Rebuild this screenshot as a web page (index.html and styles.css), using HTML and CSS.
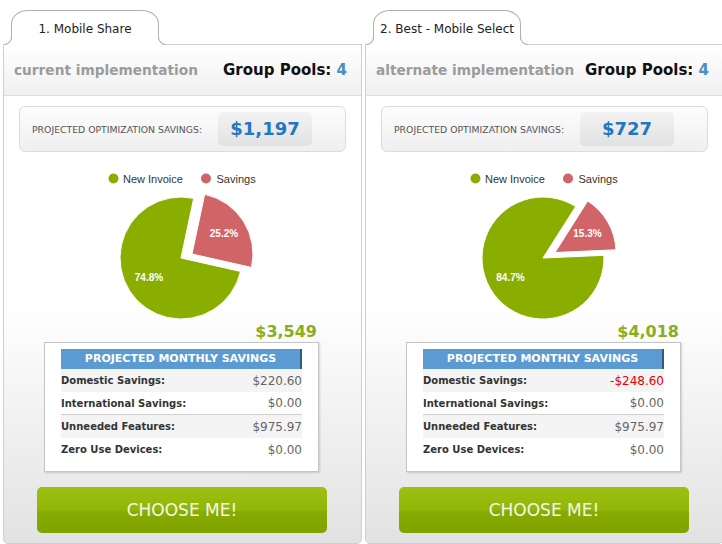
FILE: index.html
```html
<!DOCTYPE html>
<html>
<head>
    <title>Plan Comparison</title>
    <link rel="stylesheet" href="styles.css">
</head>
<body>
    <div class="plans">
        <div class="plan">
            <div class="tab">1. Mobile Share</div>
            <div class="panel">
                <div class="panel-head">
                    <span class="impl">current implementation</span>
                    <span class="pools">Group Pools: <span class="pools-num">4</span></span>
                </div>
                <div class="optimization">
                    <span class="opt-label">PROJECTED OPTIMIZATION SAVINGS:</span>
                    <span class="opt-value">$1,197</span>
                </div>
                <svg class="chart" width="240" height="157" viewBox="0 0 240 157">
                    <circle cx="52.5" cy="13.5" r="5" class="c-invoice"/>
                    <text x="62" y="18" class="legend-text">New Invoice</text>
                    <circle cx="145" cy="13.5" r="5" class="c-savings"/>
                    <text x="155.5" y="18" class="legend-text">Savings</text>
                    <path class="c-invoice slice" d="M120,93 L179.5,106.43 A61,61 0 1 1 132.68,33.34 Z"/>
                    <path class="c-savings slice" d="M131,89 L143.68,29.34 A61,61 0 0 1 190.5,102.43 Z"/>
                    <text x="88" y="115.5" class="slice-label">74.8%</text>
                    <text x="163" y="72" class="slice-label">25.2%</text>
                </svg>
                <div class="invoice-total">$3,549</div>
                <div class="monthly">
                    <div class="monthly-title">PROJECTED MONTHLY SAVINGS</div>
                    <div class="row shade"><span class="row-label">Domestic Savings:</span><span class="row-value">$220.60</span></div>
                    <div class="row divider"><span class="row-label">International Savings:</span><span class="row-value">$0.00</span></div>
                    <div class="row shade"><span class="row-label">Unneeded Features:</span><span class="row-value">$975.97</span></div>
                    <div class="row"><span class="row-label">Zero Use Devices:</span><span class="row-value">$0.00</span></div>
                </div>
                <button class="choose">CHOOSE ME!</button>
            </div>
        </div>

        <div class="plan">
            <div class="tab">2. Best - Mobile Select</div>
            <div class="panel">
                <div class="panel-head">
                    <span class="impl">alternate implementation</span>
                    <span class="pools">Group Pools: <span class="pools-num">4</span></span>
                </div>
                <div class="optimization">
                    <span class="opt-label">PROJECTED OPTIMIZATION SAVINGS:</span>
                    <span class="opt-value">$727</span>
                </div>
                <svg class="chart" width="240" height="157" viewBox="0 0 240 157">
                    <circle cx="52.5" cy="13.5" r="5" class="c-invoice"/>
                    <text x="62" y="18" class="legend-text">New Invoice</text>
                    <circle cx="145" cy="13.5" r="5" class="c-savings"/>
                    <text x="155.5" y="18" class="legend-text">Savings</text>
                    <path class="c-invoice slice" d="M120,93 L180.94,90.32 A61,61 0 1 1 152.68,41.5 Z"/>
                    <path class="c-savings slice" d="M132,87.5 L164.68,36 A61,61 0 0 1 192.94,84.82 Z"/>
                    <text x="87.5" y="115.5" class="slice-label">84.7%</text>
                    <text x="164.5" y="71.5" class="slice-label">15.3%</text>
                </svg>
                <div class="invoice-total">$4,018</div>
                <div class="monthly">
                    <div class="monthly-title">PROJECTED MONTHLY SAVINGS</div>
                    <div class="row shade"><span class="row-label">Domestic Savings:</span><span class="row-value negative">-$248.60</span></div>
                    <div class="row divider"><span class="row-label">International Savings:</span><span class="row-value">$0.00</span></div>
                    <div class="row shade"><span class="row-label">Unneeded Features:</span><span class="row-value">$975.97</span></div>
                    <div class="row"><span class="row-label">Zero Use Devices:</span><span class="row-value">$0.00</span></div>
                </div>
                <button class="choose">CHOOSE ME!</button>
            </div>
        </div>
    </div>
</body>
</html>
```

FILE: styles.css
```css
body {
    margin: 0;
    background-color: #fff;
    font-family: "DejaVu Sans", Verdana, sans-serif;
    color: #222;
    overflow: hidden;
}
.plans {
    display: flex;
    gap: 3px;
    padding-left: 3px;
}
.plan {
    width: 359px;
    flex-shrink: 0;
}
.tab {
    position: relative;
    z-index: 1;
    box-sizing: border-box;
    width: 148px;
    height: 35px;
    margin: 10px 0 -1px 8px;
    border: 1px solid #b0b0b0;
    border-bottom: none;
    border-radius: 17px 17px 0 0 / 14px 14px 0 0;
    background-color: #fff;
    font-size: 12px;
    line-height: 36px;
    text-align: center;
    color: #222;
    white-space: nowrap;
}
/* little flares where the tab meets the panel */
.tab::before,
.tab::after {
    content: "";
    position: absolute;
    bottom: 0;
    width: 7px;
    height: 7px;
    border-bottom: 1px solid #b0b0b0;
}
.tab::before {
    left: -8px;
    border-right: 1px solid #b0b0b0;
    border-bottom-right-radius: 8px;
    box-shadow: 4px 4px 0 4px #fff;
}
.tab::after {
    right: -8px;
    border-left: 1px solid #b0b0b0;
    border-bottom-left-radius: 8px;
    box-shadow: -4px 4px 0 4px #fff;
}
.panel {
    border: 1px solid #cfcfcf;
    border-radius: 0 0 5px 5px;
    background: linear-gradient(#fff 0, #fff 52%, #e2e2e2 100%);
}
.panel-head {
    box-sizing: border-box;
    height: 51px;
    display: flex;
    align-items: center;
    justify-content: space-between;
    padding: 0 14px 0 10px;
    border-bottom: 1px solid #dedede;
    background: linear-gradient(#fff, #f0f0f0);
    font-weight: bold;
}
.impl {
    font-size: 13.7px;
    color: #9b9b9b;
}
.pools {
    font-size: 15px;
    color: #111;
}
.pools-num {
    color: #4a8dc8;
}
.optimization {
    box-sizing: border-box;
    height: 46px;
    margin: 10px 15px 0 15px;
    padding-left: 12px;
    display: flex;
    align-items: center;
    border: 1px solid #dcdcdc;
    border-radius: 6px;
    background: linear-gradient(#fdfdfd, #efefef);
}
.opt-label {
    width: 186px;
    flex-shrink: 0;
    font-size: 9.3px;
    color: #555;
    white-space: nowrap;
}
.opt-value {
    width: 94px;
    height: 34px;
    line-height: 34px;
    border-radius: 5px;
    background: linear-gradient(#f3f3f3, #e2e2e2);
    text-align: center;
    font-size: 18px;
    font-weight: bold;
    color: #1f78c1;
}
.chart {
    display: block;
    margin: 13px 0 0 57px;
}
.c-invoice {
    fill: #8aae00;
}
.c-savings {
    fill: #d06467;
}
.slice {
    stroke: #fff;
    stroke-width: 1;
}
.legend-text {
    font-family: "Liberation Sans", Arial, sans-serif;
    font-size: 11px;
    fill: #333;
}
.slice-label {
    font-family: "Liberation Sans", Arial, sans-serif;
    font-size: 10px;
    font-weight: bold;
    fill: #fff;
    text-anchor: middle;
}
.invoice-total {
    height: 20px;
    line-height: 20px;
    padding-right: 44px;
    text-align: right;
    font-size: 16px;
    font-weight: bold;
    color: #8aad1b;
}
.monthly {
    box-sizing: border-box;
    width: 275px;
    margin-left: 40px;
    padding: 6px 16px 10px;
    border: 1px solid #c4c4c4;
    background-color: #fff;
    box-shadow: 1px 1px 2px rgba(0, 0, 0, 0.15);
}
.monthly-title {
    height: 20px;
    line-height: 20px;
    border-right: 2px solid #2f5c7e;
    background-color: #5b9bd1;
    color: #fff;
    font-size: 11px;
    font-weight: bold;
    text-align: center;
}
.row {
    box-sizing: border-box;
    height: 23px;
    display: flex;
    align-items: center;
    justify-content: space-between;
}
.shade {
    background-color: #f4f4f4;
}
.divider {
    border-bottom: 1px solid #cfcfcf;
}
.row-label {
    font-size: 10px;
    font-weight: bold;
    color: #333;
}
.row-value {
    font-size: 12px;
    color: #666;
}
.negative {
    color: #e00000;
}
.choose {
    display: block;
    width: 290px;
    height: 46px;
    margin: 15px 0 10px 33px;
    border: none;
    border-radius: 5px;
    background: linear-gradient(#9cc112 0, #90b608 50%, #86ab01 54%, #7fa300 100%);
    color: #f4f8e4;
    font-family: "DejaVu Sans", Verdana, sans-serif;
    font-size: 17px;
    cursor: pointer;
}
```
